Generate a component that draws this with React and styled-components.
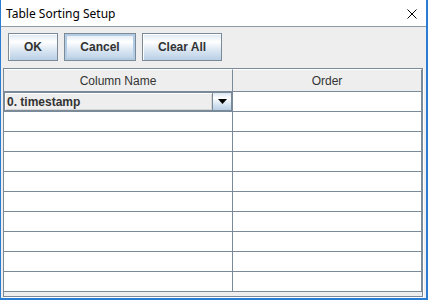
import React from "react";
import styled, { createGlobalStyle, css } from "styled-components";

const GlobalStyle = createGlobalStyle`
  html, body { margin: 0; padding: 0; background: #ffffff; }
  body { width: 428px; height: 300px; overflow: hidden; font-family: "Liberation Sans", Arial, sans-serif; }
  * { box-sizing: border-box; }
`;

const GRID = "#7a8a99";
const BLUE = "#2b7cd3";

const oceanGradient = css`
  background: linear-gradient(
    to bottom,
    #dde8f3 0%,
    #ffffff 30%,
    #dde8f3 60%,
    #b8cfe5 100%
  );
`;

const Frame = styled.div`
  width: 428px;
  height: 300px;
  border-left: 1px solid ${BLUE};
  border-right: 2px solid ${BLUE};
  border-bottom: 2px solid ${BLUE};
  background: #eeeeee;
  display: flex;
  flex-direction: column;
`;

const TitleBar = styled.div`
  height: 27px;
  flex: none;
  background: #ffffff;
  border-bottom: 1px solid #8f99a3;
  display: flex;
  align-items: center;
  justify-content: space-between;
  padding: 1px 9px 0 5px;
`;

const Title = styled.span`
  font-family: "Noto Sans", "Open Sans", sans-serif;
  font-size: 12px;
  color: #000000;
  line-height: 16px;
`;

const CloseIcon = () => (
  <svg width="10" height="10" viewBox="0 0 10 10" shapeRendering="crispEdges">
    <path d="M0.5 0.5 L9.5 9.5 M9.5 0.5 L0.5 9.5" stroke="#000" strokeWidth="1" fill="none" shapeRendering="geometricPrecision" />
  </svg>
);

const Toolbar = styled.div`
  height: 41px;
  flex: none;
  display: flex;
  gap: 6px;
  padding: 6px 0 7px 7px;
`;

const Button = styled.button`
  width: ${(p) => p.$w}px;
  height: 28px;
  padding: 0;
  margin: 0;
  border: 1px solid ${GRID};
  ${oceanGradient}
  box-shadow: ${(p) =>
    p.$focused ? "inset 0 0 0 2px #b3cce4" : "inset 1px 1px 0 #ffffff"};
  font-family: "Liberation Sans", Arial, sans-serif;
  font-weight: bold;
  font-size: 12px;
  color: #333333;
  cursor: default;
`;

const ScrollPane = styled.div`
  width: 420px;
  height: 229px;
  margin-left: 2px;
  flex: none;
  border: 1px solid ${GRID};
  box-shadow: 1px 1px 0 #ffffff;
  display: flex;
  flex-direction: column;
  background: #eeeeee;
`;

const HeaderRow = styled.div`
  display: grid;
  grid-template-columns: 229px 189px;
  height: 23px;
  flex: none;
`;

const HeaderCell = styled.div`
  background: #eeeeee;
  border-top: 1px solid #ffffff;
  border-bottom: 1px solid ${GRID};
  border-right: 1px solid ${GRID};
  display: flex;
  align-items: center;
  justify-content: center;
  font-size: 12px;
  color: #333333;
  padding-top: 1px;
`;

const Row = styled.div`
  display: grid;
  grid-template-columns: 229px 189px;
  height: 20px;
  flex: none;
`;

const Cell = styled.div`
  background: #ffffff;
  border-bottom: 1px solid ${GRID};
  border-right: 1px solid ${GRID};
  display: flex;
  min-width: 0;
`;

const Combo = styled.div`
  flex: 1;
  display: flex;
  border: 1px solid ${GRID};
  background: #eeeeee;
`;

const ComboText = styled.div`
  flex: 1;
  display: flex;
  align-items: center;
  padding-left: 2px;
  box-shadow: inset 1px 1px 0 #ffffff, inset -1px -1px 0 #d6d6d6;
  font-weight: bold;
  font-size: 12px;
  color: #333333;
`;

const ArrowButton = styled.div`
  width: 19px;
  flex: none;
  border-left: 1px solid ${GRID};
  ${oceanGradient}
  display: flex;
  align-items: center;
  justify-content: center;
`;

const DownArrow = () => (
  <svg width="9" height="5" viewBox="0 0 9 5">
    <path d="M0 0 H9 L4.5 5 Z" fill="#000" />
  </svg>
);

const Filler = styled.div`
  flex: 1;
  background: #eeeeee;
`;

export default function App() {
  const rows = Array.from({ length: 10 }, (_, i) => i);
  return (
    <>
      <GlobalStyle />
      <Frame>
        <TitleBar>
          <Title>Table Sorting Setup</Title>
          <CloseIcon />
        </TitleBar>
        <Toolbar>
          <Button $w={50}>OK</Button>
          <Button $w={72} $focused>Cancel</Button>
          <Button $w={80}>Clear All</Button>
        </Toolbar>
        <ScrollPane>
          <HeaderRow>
            <HeaderCell>Column Name</HeaderCell>
            <HeaderCell>Order</HeaderCell>
          </HeaderRow>
          {rows.map((i) => (
            <Row key={i}>
              <Cell>
                {i === 0 && (
                  <Combo>
                    <ComboText>0. timestamp</ComboText>
                    <ArrowButton>
                      <DownArrow />
                    </ArrowButton>
                  </Combo>
                )}
              </Cell>
              <Cell />
            </Row>
          ))}
          <Filler />
        </ScrollPane>
      </Frame>
    </>
  );
}
